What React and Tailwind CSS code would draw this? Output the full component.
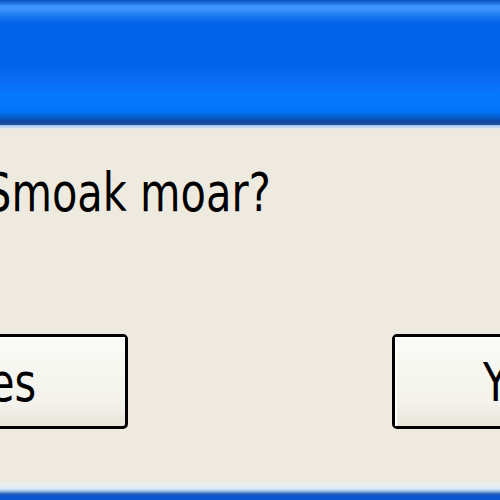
import React from "react";

const titleGradient =
  "bg-[linear-gradient(to_bottom,#0a4fc0_0px,#1f6fe0_3px,#3d95ff_6px,#3a92fb_10px,#1a78f0_16px,#0063e8_24px,#0062e8_64px,#0b6cf5_80px,#0478ff_96px,#0476fa_110px,#0463d8_116px,#0a4aa8_121px,#2050a0_124px)]";

function XpButton({ label, className, textClassName }) {
  return (
    <div
      className={`relative h-[95px] shrink-0 rounded-[5px] border-[3px] border-black bg-[linear-gradient(to_bottom,#fbfbf7,#f3f2eb_75%,#e8e5d9)] ${className}`}
    >
      <div className="flex h-full items-center border-t-2 border-l-2 border-white">
        <span
          className={`origin-left scale-x-[0.77] text-[54px] leading-none text-black ${textClassName}`}
        >
          {label}
        </span>
      </div>
    </div>
  );
}

export default function App() {
  return (
    <div
      className="flex h-[500px] w-[500px] flex-col overflow-hidden bg-[#eeeadf]"
      style={{ fontFamily: '"DejaVu Sans", Tahoma, sans-serif' }}
    >
      {/* Title bar */}
      <div className={`h-[125px] shrink-0 ${titleGradient}`}></div>
      <div className="h-[4px] shrink-0 bg-[linear-gradient(to_bottom,#9cc4ec,#e3eefa)]"></div>

      {/* Message */}
      <div className="flex h-[205px] shrink-0 items-start">
        <p className="ml-[-15px] mt-[37px] origin-left scale-x-[0.77] text-[54px] leading-none whitespace-nowrap text-black">
          Smoak moar?
        </p>
      </div>

      {/* Buttons */}
      <div className="flex shrink-0 items-start">
        <XpButton
          label="Yes"
          className="ml-[-200px] w-[328px]"
          textClassName="ml-[164px]"
        />
        <XpButton
          label="Yes"
          className="ml-[264px] w-[240px]"
          textClassName="ml-[86px]"
        />
      </div>

      <div className="flex-1"></div>

      {/* Bottom frame edge */}
      <div className="h-[20px] shrink-0 bg-[linear-gradient(to_bottom,#eeeadf_0px,#e8eef4_6px,#d4e6f8_9px,#9ec0e6_11px,#2a5fb8_14px,#0a56d0_16px,#0a56d2_20px)]"></div>
    </div>
  );
}
